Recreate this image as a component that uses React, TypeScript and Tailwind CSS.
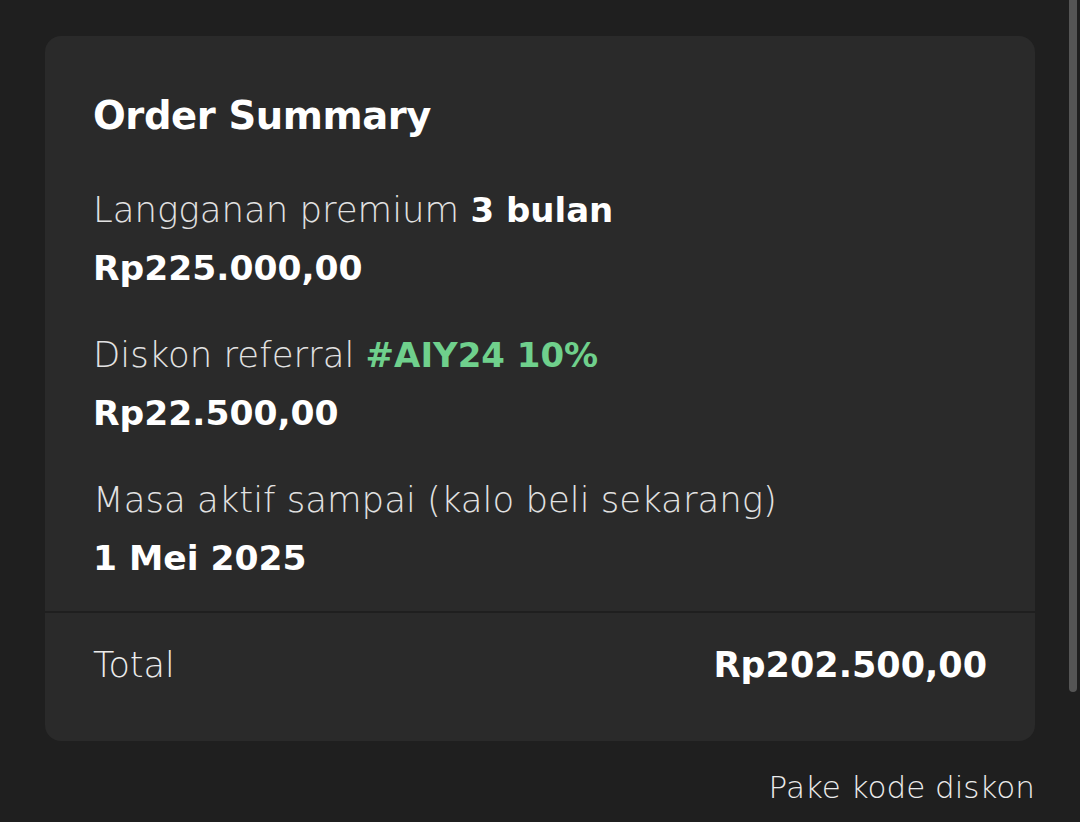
import React from 'react';

// ============================================
// Data
// ============================================

interface SummaryRow {
  label: React.ReactNode;
  value: string;
}

const rows: SummaryRow[] = [
  {
    label: (
      <>
        Langganan premium <span className="text-[34px] font-bold text-white">3 bulan</span>
      </>
    ),
    value: 'Rp225.000,00',
  },
  {
    label: (
      <>
        Diskon referral <span className="text-[34px] font-bold text-[#6fd08c]">#AIY24 10%</span>
      </>
    ),
    value: 'Rp22.500,00',
  },
  {
    label: 'Masa aktif sampai (kalo beli sekarang)',
    value: '1 Mei 2025',
  },
];

// ============================================
// Main Component
// ============================================

export default function App() {
  return (
    <div
      className="relative h-[822px] w-[1080px] overflow-hidden bg-[#1f1f1f] text-white"
      style={{ fontFamily: '"DejaVu Sans", "Open Sans", sans-serif' }}
    >
      {/* Scrollbar */}
      <div className="absolute right-[3px] top-0 h-[692px] w-[8px] rounded-b-full bg-[#555555]" />

      <div className="px-[45px] pt-[36px]">
        {/* Card */}
        <div className="w-[990px] rounded-[16px] bg-[#2a2a2a]">
          <div className="px-[48px] pt-[50px] pb-[24px]">
            <h1 className="text-[38.5px] font-bold leading-[60px] tracking-[-0.4px]">Order Summary</h1>

            <div className="mt-[35px] flex flex-col gap-[29px]">
              {rows.map((row, i) => (
                <div key={i}>
                  <p className="text-[35.5px] font-extralight leading-[58px] text-[#e2e2e2]">{row.label}</p>
                  <p className="text-[34.5px] font-bold leading-[58px]">{row.value}</p>
                </div>
              ))}
            </div>
          </div>

          <div className="h-[2px] bg-[#1f1f1f]" />

          <div className="flex items-center justify-between px-[48px] pt-[23px] pb-[47px]">
            <span className="text-[35px] font-light leading-[58px] text-[#ececec]">Total</span>
            <span className="text-[35px] font-bold leading-[58px]">Rp202.500,00</span>
          </div>
        </div>

        {/* Discount link */}
        <div className="mt-[17px] flex justify-end">
          <span className="text-[31px] font-light leading-[58px] text-[#ececec]">Pake kode diskon</span>
        </div>
      </div>
    </div>
  );
}
